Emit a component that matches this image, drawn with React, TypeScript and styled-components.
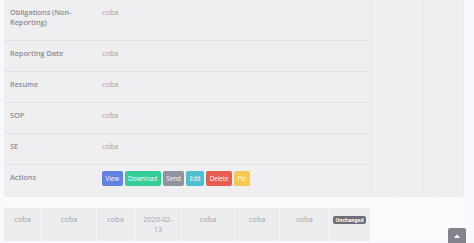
import React from "react";
import styled, { createGlobalStyle } from "styled-components";

const Global = createGlobalStyle`
  html, body { margin: 0; padding: 0; background: #f8f9fc; }
  body { font-family: "Open Sans", Lato, "Liberation Sans", sans-serif; overflow: hidden; }
  * { box-sizing: border-box; }
`;

const Page = styled.div`
  width: 474px;
  height: 243px;
  background: #f8f9fc;
  padding-left: 4px;
  position: relative;
  overflow: hidden;
`;

const Top = styled.div`
  display: flex;
  width: 460px;
  height: 197px;
  background: #efeff2;
`;

const Detail = styled.table`
  width: 364px;
  border-collapse: collapse;
  align-self: flex-start;
`;

const Row = styled.tr`
  border-bottom: 1px solid #e3e3e7;
`;

const Label = styled.th`
  width: 92px;
  text-align: left;
  vertical-align: top;
  padding: 7px 8px 13px 6px;
  font-size: 7.3px;
  line-height: 10px;
  font-weight: 600;
  color: #8c8c95;
`;

const Value = styled.td`
  vertical-align: top;
  padding: 7px 6px 13px 6px;
  font-size: 7.3px;
  line-height: 10px;
  color: #a2a2a6;
`;

const ActionsCell = styled.td`
  vertical-align: top;
  padding: 6px 6px 9px 6px;
`;

const Buttons = styled.div`
  display: flex;
  gap: 2px;
`;

const Btn = styled.span<{ $bg: string }>`
  display: inline-flex;
  align-items: center;
  height: 15px;
  padding: 0 3.5px;
  border-radius: 2px;
  background: ${(p) => p.$bg};
  color: #fff;
  font-size: 6.2px;
  opacity: 0.88;
`;

const Stripes = styled.div`
  flex: 1;
  position: relative;
`;

const Stripe = styled.div<{ $x: number; $c: string }>`
  position: absolute;
  top: 0;
  bottom: 0;
  left: ${(p) => p.$x}px;
  width: 1px;
  background: ${(p) => p.$c};
`;

const Band = styled.div`
  height: 11px;
  width: 460px;
  background: #fbfbfd;
`;

const Bottom = styled.div`
  display: flex;
  height: 33px;
  width: 460px;
  background: #fbfbfd;
`;

const Cell = styled.div<{ $w: number }>`
  width: ${(p) => p.$w}px;
  background: #ededf0;
  border-right: 1px solid #f3f3f5;
  text-align: center;
  padding-top: 6px;
  font-size: 7.3px;
  line-height: 10px;
  color: #a2a2a6;
`;

const Badge = styled.span`
  display: inline-block;
  background: #6e6e79;
  color: #fff;
  font-size: 5px;
  font-weight: 700;
  line-height: 8px;
  padding: 0 2px;
  border-radius: 2px;
  margin-top: 1px;
`;

const ScrollTop = styled.div`
  position: absolute;
  left: 448px;
  top: 228px;
  width: 18px;
  height: 18px;
  background: #84848d;
  border-radius: 2px;
  display: flex;
  justify-content: center;
  padding-top: 6px;
`;

const rows: [string, string][] = [
  ["Obligations (Non-Reporting)", "coba"],
  ["Reporting Date", "coba"],
  ["Resume", "coba"],
  ["SOP", "coba"],
  ["SE", "coba"],
];

const buttons: [string, string][] = [
  ["View", "#4e73df"],
  ["Download", "#1cc88a"],
  ["Send", "#858796"],
  ["Edit", "#36b9cc"],
  ["Delete", "#e74a3b"],
  ["Pin", "#f6c23e"],
];

const stripes: [number, string][] = [
  [2, "#e9e9ec"],
  [7, "#f2f2f4"],
  [15, "#ebebee"],
  [29, "#f2f2f4"],
  [44, "#ebebee"],
  [49, "#f2f2f4"],
  [55, "#ebebee"],
  [69, "#f2f2f4"],
  [80, "#ebebee"],
  [92, "#f2f2f4"],
];

const cells: [number, React.ReactNode][] = [
  [38, "coba"],
  [55, "coba"],
  [38, "coba"],
  [47, <>2020-02-<br />13</>],
  [53, "coba"],
  [45, "coba"],
  [50, "coba"],
  [40, <Badge>Unchanged</Badge>],
];

export default function App() {
  return (
    <>
      <Global />
      <Page>
        <Top>
          <Detail>
            <tbody>
              {rows.map(([l, v]) => (
                <Row key={l}>
                  <Label>{l}</Label>
                  <Value>{v}</Value>
                </Row>
              ))}
              <tr>
                <Label>Actions</Label>
                <ActionsCell>
                  <Buttons>
                    {buttons.map(([t, c]) => (
                      <Btn key={t} $bg={c}>{t}</Btn>
                    ))}
                  </Buttons>
                </ActionsCell>
              </tr>
            </tbody>
          </Detail>
          <Stripes>
            {stripes.map(([x, c]) => (
              <Stripe key={x} $x={x} $c={c} />
            ))}
          </Stripes>
        </Top>
        <Band />
        <Bottom>
          {cells.map(([w, c], i) => (
            <Cell key={i} $w={w}>{c}</Cell>
          ))}
        </Bottom>
        <ScrollTop>
          <svg width="6" height="4" viewBox="0 0 6 4">
            <path d="M0 4 L3 0.5 L6 4 Z" fill="#fff" />
          </svg>
        </ScrollTop>
      </Page>
    </>
  );
}
